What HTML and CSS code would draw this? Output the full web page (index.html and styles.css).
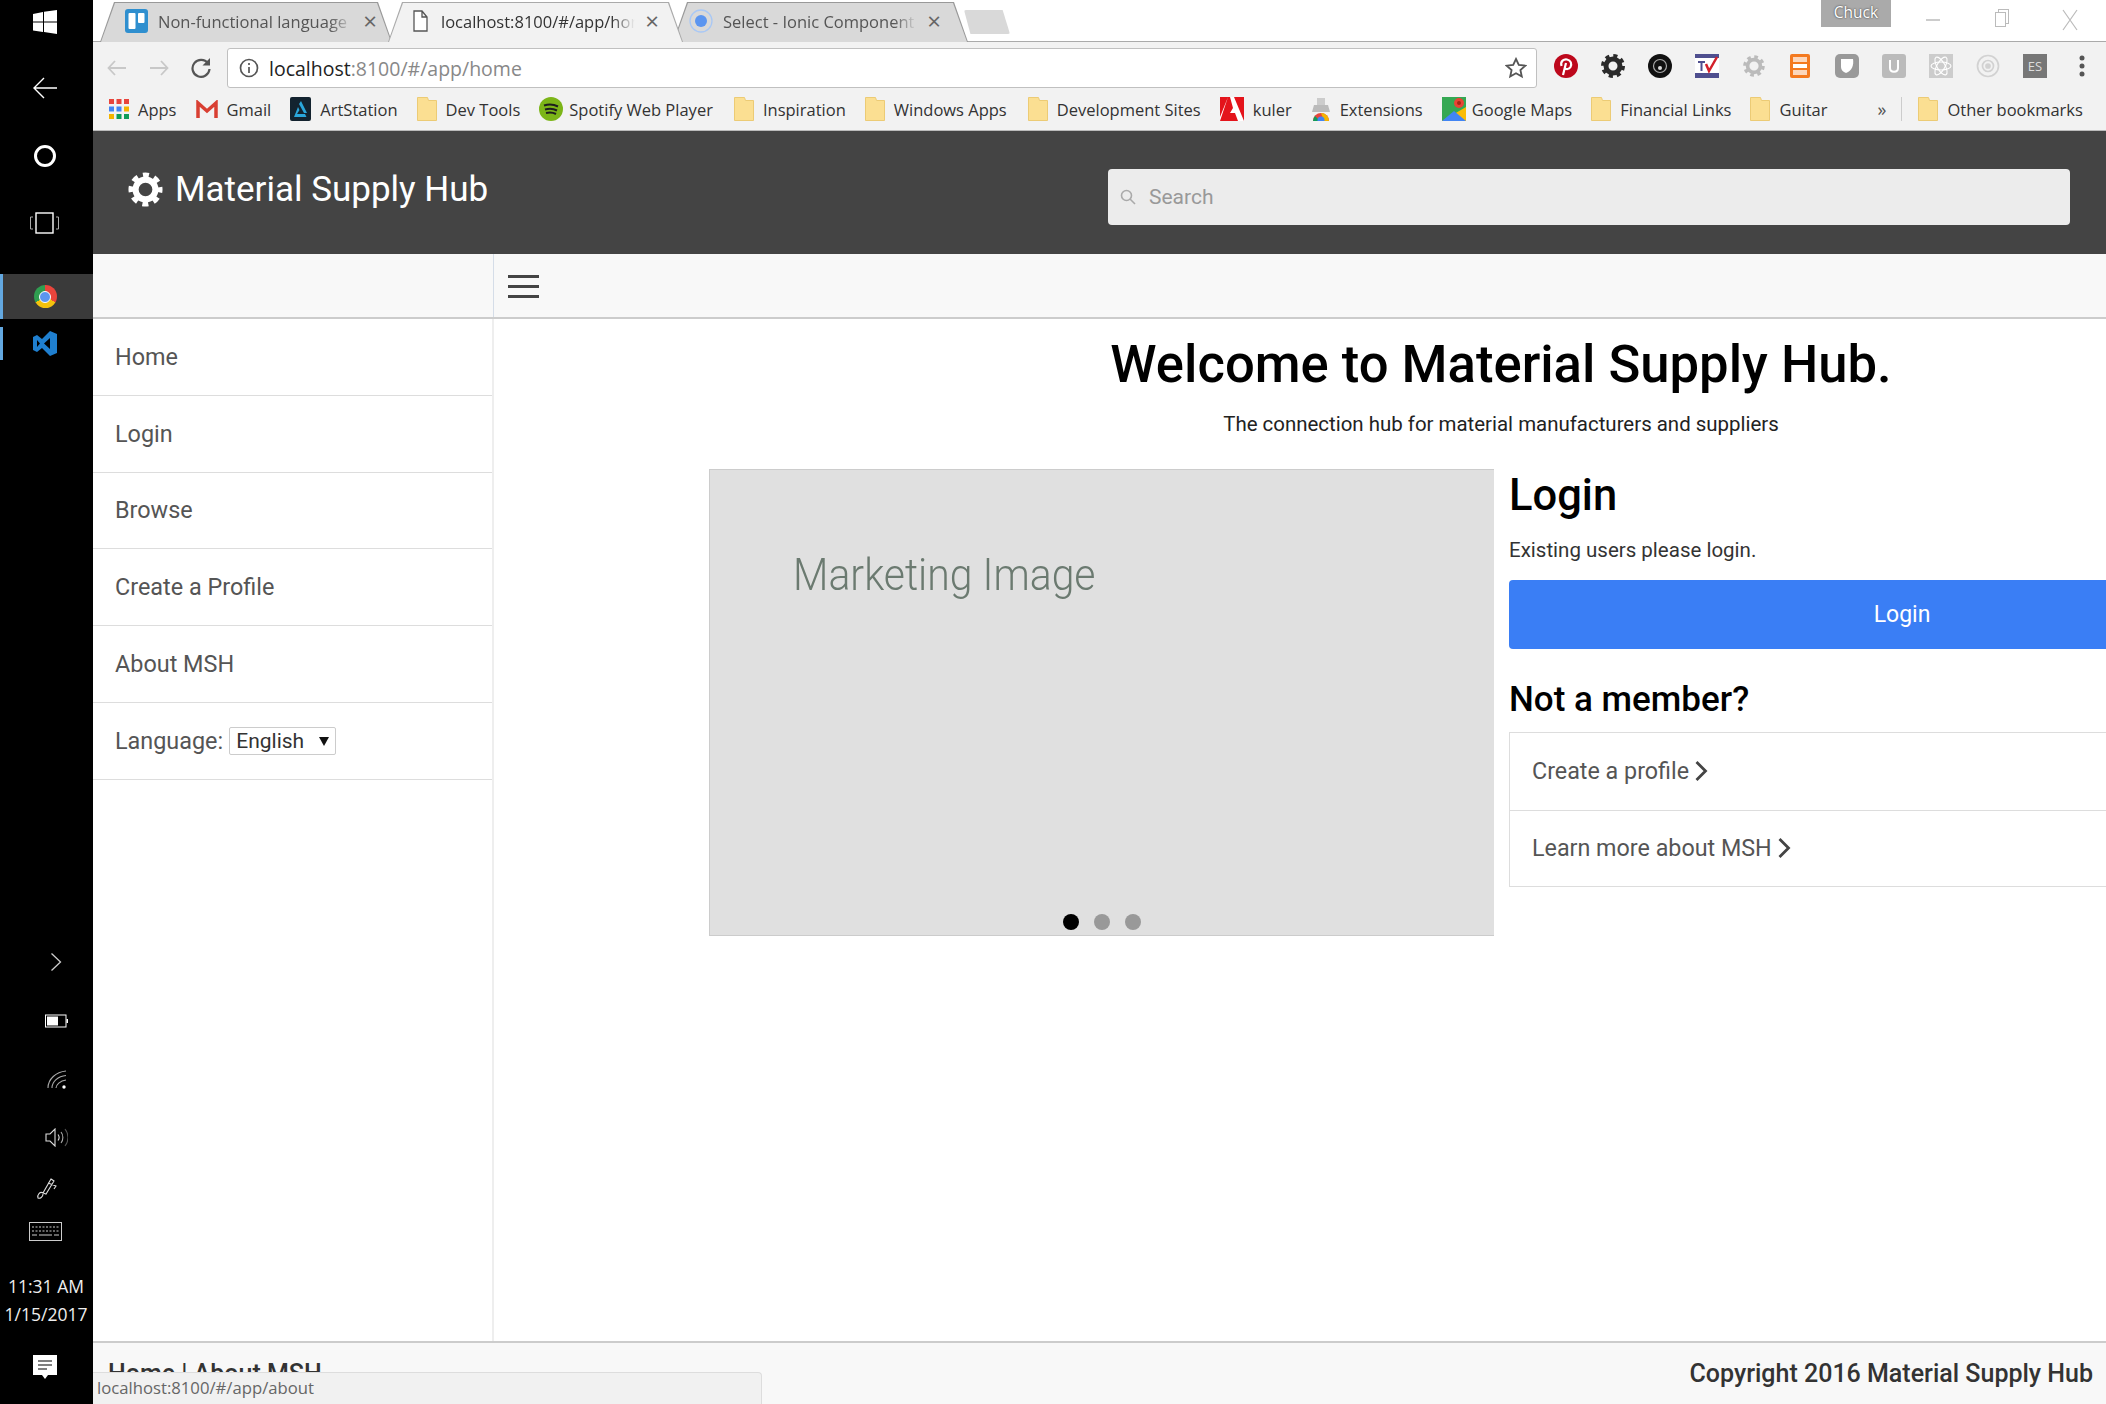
FILE: index.html
```html
<!DOCTYPE html>
<html lang="en">
<head>
    <meta charset="UTF-8">
    <title>Material Supply Hub</title>
    <link rel="stylesheet" href="styles.css">
</head>
<body>
    <aside class="taskbar">
        <div class="task-slot slot-win">
            <svg width="24" height="24" viewBox="0 0 24 24" fill="#fff"><path d="M0 4l10-2v9.500H0zM11 1.800L24 0v11.500H11zM0 12.500h10V22L0 20.500zM11 12.500h13V24l-13-2z"/></svg>
        </div>
        <div class="task-slot slot-back">
            <svg width="26" height="22" viewBox="0 0 26 22" fill="none" stroke="#fff" stroke-width="1.400"><path d="M25 11H2M12 1L2 11l10 10"/></svg>
        </div>
        <div class="task-slot slot-circle"><span class="cortana"></span></div>
        <div class="task-slot slot-view">
            <svg width="32" height="22" viewBox="0 0 32 22" fill="none" stroke="#fff"><rect x="7" y="1" width="17" height="20" stroke-width="1.400"/><path d="M4 5H1.500v12H4M27 5h2.500v12H27" stroke="#aaa"/></svg>
        </div>
        <div class="task-slot slot-chrome is-running is-active"><span class="chrome-logo"><span></span></span></div>
        <div class="task-slot slot-code is-running">
            <svg width="24" height="25" viewBox="0 0 24 25" fill="#1f7fcf"><path d="M17 0l7 3v19l-7 3-8-8-5 4-4-2V6l4-2 5 4zM4 9v7l3-3.500zM17 7l-6 5.500 6 5.500z"/></svg>
        </div>

        <div class="tray">
            <svg class="tray-chevron" width="12" height="20" viewBox="0 0 12 20" fill="none" stroke="#ccc" stroke-width="1.300"><path d="M1.500 1.500l9 8.500-9 8.500"/></svg>
            <svg class="tray-battery" width="23" height="14" viewBox="0 0 23 14"><rect x="0.500" y="1" width="20.500" height="12" fill="none" stroke="#fff"/><rect x="2" y="2.500" width="11" height="9" fill="#fff"/><rect x="21.500" y="5" width="1.500" height="4" fill="#fff"/></svg>
            <svg class="tray-wifi" width="20" height="20" viewBox="0 0 20 20" fill="none" stroke="#aaa" stroke-width="1.100"><path d="M1 18C1 9 9 2 19 1M5 18c0-6 6-12 14-12.500M9 18c0-3 4-7.500 10-8"/><circle cx="17" cy="17" r="1.700" fill="#fff" stroke="none"/></svg>
            <svg class="tray-sound" width="23" height="19" viewBox="0 0 23 19" fill="none" stroke="#ddd" stroke-width="1.100"><path d="M1 6h4l5-5v17l-5-5H1zM13 6.500c1.500 2 1.500 4 0 6"/><path d="M16 4c2.500 3 2.500 8 0 11" stroke="#aaa"/><path d="M20 1c4 5 4 12 0 17" stroke="#555"/></svg>
            <svg class="tray-pen" width="21" height="22" viewBox="0 0 21 22" fill="none" stroke="#ddd" stroke-width="1.100"><path d="M15 1l3 2-8 13-3-1zM12 5l8 3-2 3M7 15c-3-2-6 2-5 5 2 1 5-1 5-4"/></svg>
            <svg class="tray-keys" width="33" height="19" viewBox="0 0 33 19" fill="none" stroke="#ccc"><rect x="0.500" y="0.500" width="32" height="18"/><path d="M3 5h27M3 9h27" stroke-dasharray="2 1.500"/><path d="M3 13h5M10 13h13M25 13h5"/></svg>
            <div class="clock">
                <span>11:31 AM</span>
                <span>1/15/2017</span>
            </div>
            <svg class="tray-note" width="24" height="24" viewBox="0 0 24 24"><path d="M0 0h24v20h-9l-3 4-3-4H0z" fill="#fff"/><path d="M5 6h14M5 10h14M5 14h9" stroke="#000" stroke-width="1.200"/></svg>
        </div>
    </aside>

    <div class="window">
        <div class="tabstrip">
            <div class="tab is-first">
                <div class="tab-face">
                    <svg class="tab-icon" width="23" height="24" viewBox="0 0 23 24"><rect width="23" height="24" rx="3" fill="#2f8fcf"/><rect x="3.500" y="4" width="7" height="16" rx="1" fill="#fff"/><rect x="13" y="4" width="6.500" height="10" rx="1" fill="#fff"/></svg>
                    <span class="tab-title">Non-functional language</span>
                    <span class="tab-close">×</span>
                </div>
            </div>
            <div class="tab is-current">
                <div class="tab-face">
                    <svg class="tab-icon" width="15" height="22" viewBox="0 0 15 22" fill="#fff" stroke="#555" stroke-width="1.300"><path d="M1 1h8l5 6v14H1zM9 1v6h5"/></svg>
                    <span class="tab-title">localhost:8100/#/app/home</span>
                    <span class="tab-close">×</span>
                </div>
            </div>
            <div class="tab is-last">
                <div class="tab-face">
                    <svg class="tab-icon" width="24" height="24" viewBox="0 0 24 24"><circle cx="12" cy="12" r="11" fill="none" stroke="#a9c8f5" stroke-width="1.300"/><circle cx="12" cy="12" r="6" fill="#5b95f0"/></svg>
                    <span class="tab-title">Select - Ionic Component</span>
                    <span class="tab-close">×</span>
                </div>
            </div>
            <span class="new-tab"></span>
            <div class="window-controls">
                <span class="profile">Chuck</span>
                <svg class="win-btn" width="16" height="16" viewBox="0 0 16 16" stroke="#bbb" stroke-width="1.500"><path d="M1 8h14"/></svg>
                <svg class="win-btn" width="16" height="20" viewBox="0 0 16 20" fill="#fff" stroke="#bbb"><rect x="4.500" y="1.500" width="10" height="14"/><rect x="1.500" y="4.500" width="10" height="14"/></svg>
                <svg class="win-btn" width="16" height="24" viewBox="0 0 16 24" stroke="#bbb" stroke-width="1.200"><path d="M1 2l14 20M15 2L1 22"/></svg>
            </div>
        </div>

        <div class="toolbar">
            <svg class="nav-icon" width="20" height="16" viewBox="0 0 20 16" fill="none" stroke="#c8c8c8" stroke-width="1.800"><path d="M19 8H2M8 1L1.500 8 8 15"/></svg>
            <svg class="nav-icon" width="20" height="16" viewBox="0 0 20 16" fill="none" stroke="#c8c8c8" stroke-width="1.800"><path d="M1 8h17M12 1l6.500 7-6.500 7"/></svg>
            <svg class="nav-icon" width="22" height="22" viewBox="0 0 22 22" fill="none" stroke="#555" stroke-width="2.200"><path d="M18 6.500A8.500 8.500 0 1 0 19.500 12"/><path d="M20 1v7.500h-7.500z" fill="#555" stroke="none"/></svg>
            <div class="urlbar">
                <svg width="20" height="20" viewBox="0 0 20 20" fill="none" stroke="#555" stroke-width="1.700"><circle cx="10" cy="10" r="8.500"/><path d="M10 9v6M10 5v2"/></svg>
                <span class="url"><b>localhost</b>:8100/#/app/home</span>
                <svg class="url-star" width="22" height="22" viewBox="0 0 22 22" fill="none" stroke="#555" stroke-width="1.800"><path d="M11 2l2.800 6 6.500.700-4.900 4.300 1.400 6.500L11 16.200 5.200 19.500l1.400-6.500-4.900-4.300 6.500-.7z"/></svg>
            </div>
            <div class="extensions">
                <span class="ext"><svg width="24" height="24" viewBox="0 0 24 24"><circle cx="12" cy="12" r="12" fill="#bd081c"/><path d="M9 21l3-12M7.500 12C6 7 10 5 13 5.500c4 .6 5 4.500 3.500 7.500-1.500 2.500-4.500 2.500-5.500 1" fill="none" stroke="#fff" stroke-width="2.200"/></svg></span>
                <span class="ext"><svg width="24" height="24" viewBox="0 0 24 24"><circle cx="12" cy="12" r="7" fill="none" stroke="#2b2b2b" stroke-width="5"/><circle cx="12" cy="12" r="10" fill="none" stroke="#2b2b2b" stroke-width="4" stroke-dasharray="4 3.850"/></svg></span>
                <span class="ext"><svg width="24" height="24" viewBox="0 0 24 24"><circle cx="12" cy="12" r="12" fill="#111"/><circle cx="12" cy="12" r="6.500" fill="none" stroke="#aaa" stroke-width="1.200"/><circle cx="12" cy="14" r="2" fill="#ddd"/></svg></span>
                <span class="ext"><svg width="24" height="24" viewBox="0 0 24 24"><rect width="24" height="24" fill="#4f4f8f"/><rect y="4" width="24" height="15" fill="#fff"/><path d="M3 7h7v2H7.500v8h-2V9H3z" fill="#4f4f8f"/><path d="M11 10l3 7L22 3" fill="none" stroke="#d3202a" stroke-width="2.500"/></svg></span>
                <span class="ext is-dim"><svg width="22" height="24" viewBox="0 0 24 24"><circle cx="12" cy="12" r="7" fill="none" stroke="#bbb" stroke-width="4"/><circle cx="12" cy="12" r="10" fill="none" stroke="#bbb" stroke-width="3.500" stroke-dasharray="4 3.850"/></svg></span>
                <span class="ext"><svg width="20" height="24" viewBox="0 0 20 24"><rect width="20" height="24" rx="2" fill="#f47a20"/><rect x="3" y="3" width="14" height="5" fill="#fff" opacity=".7"/><rect x="3" y="10" width="14" height="4" fill="#fff"/><rect x="3" y="16" width="14" height="5" fill="#fff" opacity=".7"/></svg></span>
                <span class="ext"><svg width="24" height="24" viewBox="0 0 24 24"><rect width="24" height="24" rx="5" fill="#999"/><path d="M6 5h12c1 6-1 12-7 14-3-1-5-3-5-6z" fill="#fff"/></svg></span>
                <span class="ext"><svg width="24" height="24" viewBox="0 0 24 24"><rect width="24" height="24" rx="3" fill="#bbb"/><path d="M8 6v8c0 5 8 5 8 0V6" fill="none" stroke="#fff" stroke-width="2"/></svg></span>
                <span class="ext"><svg width="24" height="24" viewBox="0 0 24 24" fill="none" stroke="#fff" stroke-width="1.100"><rect width="24" height="24" fill="#ccc" stroke="none"/><ellipse cx="12" cy="12" rx="10" ry="4"/><ellipse cx="12" cy="12" rx="10" ry="4" transform="rotate(60 12 12)"/><ellipse cx="12" cy="12" rx="10" ry="4" transform="rotate(120 12 12)"/></svg></span>
                <span class="ext"><svg width="24" height="24" viewBox="0 0 24 24" fill="none" stroke="#d2d2d2" stroke-width="1.700"><circle cx="12" cy="12" r="10.500"/><circle cx="12" cy="12" r="5.500"/><circle cx="12" cy="12" r="2" fill="#d2d2d2"/></svg></span>
                <span class="ext"><span class="ext-es">ES</span></span>
                <span class="ext"><svg width="6" height="24" viewBox="0 0 6 24" fill="#555"><circle cx="3" cy="4" r="2.500"/><circle cx="3" cy="12" r="2.500"/><circle cx="3" cy="20" r="2.500"/></svg></span>
            </div>
        </div>

        <div class="bookmarks">
            <span class="mark mark-apps">
                <svg width="20" height="20" viewBox="0 0 20 20"><g fill="#e8453c"><rect width="5" height="5"/><rect x="7.500" width="5" height="5"/><rect x="15" width="5" height="5"/></g><g fill="#4285f4"><rect y="7.500" width="5" height="5"/><rect x="7.500" y="7.500" width="5" height="5"/></g><rect x="15" y="7.500" width="5" height="5" fill="#f4b400"/><rect y="15" width="5" height="5" fill="#f4b400"/><rect x="7.500" y="15" width="5" height="5" fill="#0f9d58"/><rect x="15" y="15" width="5" height="5" fill="#0f9d58"/></svg>
                Apps
            </span>
            <span class="mark mark-gmail">
                <svg width="22" height="18" viewBox="0 0 22 18" fill="none" stroke="#d93f32" stroke-width="3.500"><path d="M2 18V3l9 8 9-8v15"/></svg>
                Gmail
            </span>
            <span class="mark mark-art">
                <svg width="21" height="24" viewBox="0 0 21 24"><rect width="21" height="24" rx="2" fill="#13232f"/><path d="M11 4l6 12h-3L9 7zM8 10l1.500 3L7 17h8l1.500 3H4z" fill="#2aa6da"/></svg>
                ArtStation
            </span>
            <span class="mark mark-dev">
                <svg class="folder" width="20" height="24" viewBox="0 0 20 24"><path d="M.5.500h10l1 3h8v20H.5z" fill="#fbdf92" stroke="#eccb75"/></svg>
                Dev Tools
            </span>
            <span class="mark mark-spot">
                <svg width="24" height="24" viewBox="0 0 24 24"><circle cx="12" cy="12" r="12" fill="#7cb518"/><path d="M5 8.500c5-1.500 10-1 14 1M6 12.500c4-1 8.500-.8 12 1M7 16c3.500-.8 7-.6 10 1" fill="none" stroke="#1e1e1e" stroke-width="2"/></svg>
                Spotify Web Player
            </span>
            <span class="mark mark-insp">
                <svg class="folder" width="20" height="24" viewBox="0 0 20 24"><path d="M.5.500h10l1 3h8v20H.5z" fill="#fbdf92" stroke="#eccb75"/></svg>
                Inspiration
            </span>
            <span class="mark mark-win">
                <svg class="folder" width="20" height="24" viewBox="0 0 20 24"><path d="M.5.500h10l1 3h8v20H.5z" fill="#fbdf92" stroke="#eccb75"/></svg>
                Windows Apps
            </span>
            <span class="mark mark-sites">
                <svg class="folder" width="20" height="24" viewBox="0 0 20 24"><path d="M.5.500h10l1 3h8v20H.5z" fill="#fbdf92" stroke="#eccb75"/></svg>
                Development Sites
            </span>
            <span class="mark mark-kuler">
                <svg width="24" height="24" viewBox="0 0 24 24"><rect width="24" height="24" fill="#e4141b"/><path d="M10 0h4l10 24h-6l-3-8h-5l3-5zM8 0L0 20V24z" fill="#fff"/></svg>
                kuler
            </span>
            <span class="mark mark-ext">
                <svg width="20" height="24" viewBox="0 0 20 24"><rect x="6" y="1" width="8" height="7" fill="#ccc"/><path d="M3 8h14l2 7H1z" fill="#bbb"/><path d="M2 24a8 8 0 0 1 16 0z" fill="#e8453c"/><path d="M10 16a8 8 0 0 1 8 8h-5z" fill="#f4b400"/><path d="M2 24a8 8 0 0 1 2-5l5 5z" fill="#0f9d58"/><circle cx="10" cy="23" r="3.500" fill="#4285f4"/></svg>
                Extensions
            </span>
            <span class="mark mark-maps">
                <svg width="24" height="24" viewBox="0 0 24 24"><rect width="24" height="24" fill="#35a853"/><path d="M0 24L24 10v14z" fill="#fbbc05"/><path d="M0 24L12 14l12 10z" fill="#4285f4"/><circle cx="17" cy="6" r="5" fill="#ea4335"/><circle cx="17" cy="6" r="2" fill="#a52714"/></svg>
                Google Maps
            </span>
            <span class="mark mark-fin">
                <svg class="folder" width="20" height="24" viewBox="0 0 20 24"><path d="M.5.500h10l1 3h8v20H.5z" fill="#fbdf92" stroke="#eccb75"/></svg>
                Financial Links
            </span>
            <span class="mark mark-guitar">
                <svg class="folder" width="20" height="24" viewBox="0 0 20 24"><path d="M.5.500h10l1 3h8v20H.5z" fill="#fbdf92" stroke="#eccb75"/></svg>
                Guitar
            </span>
            <span class="mark-more">»</span>
            <span class="mark-sep"></span>
            <span class="mark">
                <svg class="folder" width="20" height="24" viewBox="0 0 20 24"><path d="M.5.500h10l1 3h8v20H.5z" fill="#fbdf92" stroke="#eccb75"/></svg>
                Other bookmarks
            </span>
        </div>

        <div class="page">
            <header class="site-header">
                <svg class="logo" width="35" height="35" viewBox="0 0 37 37" fill="none" stroke="#fff"><circle cx="18.500" cy="18.500" r="10.500" stroke-width="6.500"/><circle cx="18.500" cy="18.500" r="15" stroke-width="6" stroke-dasharray="6.200 5.580" stroke-dashoffset="3.100"/></svg>
                <h2 class="site-title">Material Supply Hub</h2>
                <div class="search">
                    <svg width="16" height="16" viewBox="0 0 16 16" fill="none" stroke="#aaa" stroke-width="1.600"><circle cx="6.500" cy="6.500" r="5"/><path d="M10 10l5 5"/></svg>
                    <span>Search</span>
                </div>
            </header>

            <div class="subbar">
                <div class="subbar-left"></div>
                <button class="menu-btn"><span></span><span></span><span></span></button>
            </div>

            <div class="page-body">
                <nav class="sidebar">
                    <a class="side-item">Home</a>
                    <a class="side-item">Login</a>
                    <a class="side-item">Browse</a>
                    <a class="side-item">Create a Profile</a>
                    <a class="side-item">About MSH</a>
                    <div class="side-item">
                        Language:
                        <label class="lang">
                            <select>
                                <option>English</option>
                            </select>
                        </label>
                    </div>
                </nav>

                <main class="main">
                    <div class="main-inner">
                        <h1>Welcome to Material Supply Hub.</h1>
                        <p class="tagline">The connection hub for material manufacturers and suppliers</p>
                        <div class="home-row">
                            <div class="slider">
                                <div class="slide-text">Marketing Image</div>
                                <div class="dots">
                                    <span class="dot is-on"></span>
                                    <span class="dot"></span>
                                    <span class="dot"></span>
                                </div>
                            </div>
                            <div class="login-col">
                                <h2 class="login-title">Login</h2>
                                <p class="login-note">Existing users please login.</p>
                                <button class="login-btn"><span>Login</span></button>
                                <h3 class="member-title">Not a member?</h3>
                                <div class="member-list">
                                    <a class="member-item">Create a profile
                                        <svg width="14" height="22" viewBox="0 0 14 22" fill="none" stroke="#444" stroke-width="2.800"><path d="M2.500 2l9 9-9 9"/></svg>
                                    </a>
                                    <a class="member-item">Learn more about MSH
                                        <svg width="14" height="22" viewBox="0 0 14 22" fill="none" stroke="#444" stroke-width="2.800"><path d="M2.500 2l9 9-9 9"/></svg>
                                    </a>
                                </div>
                            </div>
                        </div>
                    </div>
                </main>
            </div>

            <footer class="site-footer">
                <span>Home | About MSH</span>
                <span>Copyright 2016 Material Supply Hub</span>
            </footer>
        </div>

        <div class="status-bubble">localhost:8100/#/app/about</div>
    </div>
</body>
</html>
```

FILE: styles.css
```css
* {
    box-sizing: border-box;
}

html {
    height: 1404px;
    overflow: hidden;
}

body {
    margin: 0;
    width: 2106px;
    height: 1404px;
    display: flex;
    overflow: hidden;
    font-family: 'Roboto', sans-serif;
    background-color: #fff;
}

/* Windows taskbar */
.taskbar {
    width: 93px;
    flex-shrink: 0;
    background-color: #000;
    display: flex;
    flex-direction: column;
}

.task-slot {
    padding-right: 3px;
    display: flex;
    align-items: center;
    justify-content: center;
}

.slot-win { height: 44px; }
.slot-back { height: 44px; margin-top: 22px; }
.slot-circle { height: 44px; margin-top: 24px; }
.slot-view { height: 44px; margin-top: 23px; }
.slot-chrome { height: 45px; margin-top: 29px; background-color: #3a3a3a; }
.slot-code { height: 33px; margin-top: 8px; }

.is-running {
    border-left: 3px solid #63a8e0;
    padding-right: 6px;
}

.cortana {
    width: 22px;
    height: 22px;
    border: 3px solid #fff;
    border-radius: 50%;
}

.chrome-logo {
    width: 23px;
    height: 23px;
    border-radius: 50%;
    background: conic-gradient(#e8453c 0 120deg, #f4c20d 120deg 240deg, #2f9e50 240deg 360deg);
    display: flex;
    align-items: center;
    justify-content: center;
}

.chrome-logo span {
    width: 12px;
    height: 12px;
    border-radius: 50%;
    background-color: #5b95f0;
    border: 1.5px solid #fff;
}

.tray {
    margin-top: auto;
    padding: 0 3px 25px 0;
    display: flex;
    flex-direction: column;
    align-items: center;
}

.tray-chevron { margin-left: 22px; }
.tray-battery { margin: 42px 0 0 22px; }
.tray-wifi { margin: 42px 0 0 24px; }
.tray-sound { margin: 38px 0 0 22px; }
.tray-pen { margin: 31px 0 0 2px; }
.tray-keys { margin: 22px 0 0 0; }

.clock {
    margin: 35px 0 0 2px;
    display: flex;
    flex-direction: column;
    align-items: center;
    gap: 7px;
    font-family: 'Open Sans', sans-serif;
    font-size: 17.5px;
    line-height: 21px;
    color: #eee;
}

.tray-note { margin-top: 30px; }

/* Browser chrome */
.window {
    position: relative;
    flex: 1;
    min-width: 0;
    display: flex;
    flex-direction: column;
}

.tabstrip {
    height: 42px;
    display: flex;
    align-items: flex-end;
    padding-left: 7px;
    background-color: #fff;
    border-bottom: 1px solid #aaa;
}

.tab {
    width: 292px;
    height: 40px;
    margin-right: -4px;
    margin-bottom: -1px;
    background-color: #999;
    clip-path: polygon(14px 0, calc(100% - 14px) 0, 100% 100%, 0 100%);
}

.tab.is-current {
    width: 295px;
    margin-right: -10px;
    z-index: 1;
    background-color: #aaa;
}

.tab.is-last {
    width: 295px;
    margin-right: -4px;
}

.tab-face {
    height: calc(100% - 1px);
    margin: 1px 1px 0;
    padding: 0 18px 3px 24px;
    display: flex;
    align-items: center;
    gap: 10px;
    background-color: #d9d9d9;
    clip-path: polygon(14px 0, calc(100% - 14px) 0, 100% 100%, 0 100%);
    font-family: 'Open Sans', sans-serif;
    font-size: 16.5px;
    color: #555;
}

.is-first .tab-face {
    padding-right: 14px;
}

.is-current .tab-face {
    padding-right: 23px;
    background-color: #f2f2f2;
    color: #333;
}

.is-last .tab-face {
    padding-right: 26px;
}

.tab-icon {
    flex-shrink: 0;
}

.is-current .tab-icon {
    margin-right: 3px;
}

.is-last .tab-icon {
    margin-left: -9px;
}

.tab-title {
    flex: 1;
    min-width: 0;
    white-space: nowrap;
    overflow: hidden;
    -webkit-mask-image: linear-gradient(to right, #000 88%, transparent);
    mask-image: linear-gradient(to right, #000 88%, transparent);
}

.tab-close {
    font-size: 24px;
    line-height: 24px;
    color: #666;
}

.new-tab {
    width: 46px;
    height: 24px;
    margin: 0 0 7px 0;
    background-color: #d9d9d9;
    border-radius: 2px;
    clip-path: polygon(0 0, 84% 0, 100% 100%, 14% 100%);
}

.window-controls {
    margin-left: auto;
    align-self: flex-start;
    display: flex;
    align-items: flex-start;
}

.profile {
    width: 70px;
    height: 27px;
    background-color: #aaa;
    color: #fff;
    font-family: 'Open Sans', sans-serif;
    font-size: 15.5px;
    line-height: 25px;
    text-align: center;
    text-shadow: 0 0 2px #222;
}

.win-btn {
    margin: 8px 0 0 53px;
}

.win-btn:first-of-type {
    margin-top: 12px;
    margin-left: 34px;
}

.win-btn:last-child {
    margin-left: 52px;
    margin-right: 28px;
    margin-top: 8px;
}

.toolbar {
    height: 46px;
    padding: 6px 0 0 14px;
    display: flex;
    align-items: flex-start;
    background-color: #f2f2f2;
}

.nav-icon {
    margin: 12px 22px 0 0;
}

.nav-icon:nth-child(3) {
    margin: 9px 15px 0 -1px;
}

.urlbar {
    width: 1310px;
    height: 40px;
    padding: 0 9px 0 11px;
    display: flex;
    align-items: center;
    gap: 10px;
    background-color: #fff;
    border: 1px solid #c0c0c0;
    border-radius: 3px;
}

.url {
    flex: 1;
    font-family: 'Open Sans', sans-serif;
    font-size: 19.5px;
    color: #888;
}

.url b {
    font-weight: normal;
    color: #222;
}

.extensions {
    margin: 3px 0 0 5.5px;
    display: flex;
}

.ext {
    width: 46.9px;
    height: 30px;
    display: flex;
    align-items: center;
    justify-content: center;
}

.ext-es {
    width: 24px;
    height: 24px;
    background-color: #777;
    color: #ddd;
    font-family: 'Open Sans', sans-serif;
    font-size: 13px;
    line-height: 24px;
    text-align: center;
}

.bookmarks {
    height: 43px;
    padding: 0 0 0 16px;
    display: flex;
    align-items: center;
    gap: 19px;
    background-color: #f2f2f2;
    border-bottom: 1px solid #bbb;
    font-family: 'Open Sans', sans-serif;
    font-size: 16.5px;
    color: #333;
}

.mark {
    display: flex;
    align-items: center;
    gap: 9px;
    white-space: nowrap;
}

.mark svg {
    flex-shrink: 0;
}

.mark-spot {
    gap: 6px;
    margin-right: 2px;
}

.mark-maps {
    gap: 6px;
}

.mark-win {
    margin-right: 2px;
}

.mark-more {
    margin-left: 31px;
    color: #555;
    font-size: 18px;
}

.mark-sep {
    width: 1px;
    height: 24px;
    margin: 0 -3px 0 -4px;
    background-color: #ccc;
}

/* Page */
.page {
    flex: 1;
    min-height: 0;
    display: flex;
    flex-direction: column;
}

.site-header {
    height: 123px;
    padding: 0 36px 6px 35px;
    display: flex;
    align-items: center;
    background-color: #444;
    color: #fff;
}

.logo {
    flex-shrink: 0;
}

.site-title {
    margin: 0 0 0 12px;
    font-size: 35px;
    font-weight: 400;
}

.search {
    width: 962px;
    height: 56px;
    margin: 14px 0 0 auto;
    padding: 0 12px;
    display: flex;
    align-items: center;
    gap: 13px;
    background-color: #ececec;
    border-radius: 4px;
    font-size: 21px;
    color: #999;
}

.subbar {
    height: 65px;
    display: flex;
    background-color: #f8f8f8;
    border-bottom: 2px solid #ccc;
}

.subbar-left {
    width: 401px;
    border-right: 1px solid #d5dde8;
}

.menu-btn {
    width: 60px;
    padding: 2px 15px 0 14px;
    border: none;
    background: none;
    display: flex;
    flex-direction: column;
    justify-content: center;
    gap: 7px;
}

.menu-btn span {
    height: 3px;
    background-color: #444;
}

.page-body {
    flex: 1;
    min-height: 0;
    display: flex;
}

.sidebar {
    width: 401px;
    flex-shrink: 0;
    border-right: 2px solid #eee;
}

.side-item {
    height: 76.8px;
    padding-left: 22px;
    display: flex;
    align-items: center;
    border-bottom: 1px solid #ddd;
    font-size: 23.4px;
    color: #555;
}

.lang {
    position: relative;
    margin-left: 6px;
    display: inline-block;
}

.lang::after {
    content: "";
    position: absolute;
    right: 7px;
    top: 10px;
    border-left: 5px solid transparent;
    border-right: 5px solid transparent;
    border-top: 9px solid #111;
}

.lang select {
    display: block;
    width: 107px;
    height: 28px;
    padding: 0 0 0 6px;
    appearance: none;
    background-color: #fff;
    border: 1px solid #ccc;
    border-radius: 2px;
    font-family: 'Roboto', sans-serif;
    font-size: 21px;
    color: #333;
}

.main {
    flex: 1;
    min-width: 0;
    overflow: hidden;
}

/* the content is wider than the window, the right side gets cut off */
.main-inner {
    width: 2014px;
    padding-top: 15px;
    display: flex;
    flex-direction: column;
    align-items: center;
}

h1 {
    margin: 0;
    font-size: 52.6px;
    line-height: 60px;
    font-weight: 500;
    color: #000;
}

.tagline {
    margin: 16px 0 0;
    font-size: 20.45px;
    line-height: 28px;
    color: #222;
}

.home-row {
    width: 1586px;
    margin: 31px 0 0 2px;
    display: flex;
    gap: 15px;
}

.slider {
    position: relative;
    width: 785px;
    height: 467px;
    padding: 79px 0 0 83px;
    background-color: #e0e0e0;
    border: 1px solid #ccc;
    border-width: 1px 0 1px 1px;
}

.slide-text {
    font-size: 44px;
    font-weight: 300;
    line-height: 52px;
    color: #6b7a70;
    transform: scaleX(0.93);
    transform-origin: left;
}

.dots {
    position: absolute;
    left: 0;
    right: 0;
    bottom: 5px;
    display: flex;
    justify-content: center;
    gap: 15px;
}

.dot {
    width: 16px;
    height: 16px;
    border-radius: 50%;
    background-color: #999;
}

.dot.is-on {
    background-color: #000;
}

.login-col {
    flex: 1;
    min-width: 0;
}

.login-title {
    margin: 2px 0 0;
    font-size: 43.5px;
    line-height: 50px;
    font-weight: 500;
    color: #000;
}

.login-note {
    margin: 15px 0 0;
    font-size: 20.5px;
    line-height: 28px;
    color: #333;
}

.login-btn {
    width: 100%;
    height: 69px;
    margin-top: 16px;
    display: block;
    background-color: #3a7ef5;
    border: none;
    border-radius: 4px;
    color: #fff;
    font-family: 'Roboto', sans-serif;
    font-size: 23px;
}

.member-title {
    margin: 31px 0 0;
    font-size: 35px;
    line-height: 40px;
    font-weight: 500;
    color: #000;
}

.member-list {
    margin-top: 12px;
    border: 1px solid #ddd;
    border-right: none;
}

.member-item {
    height: 76.5px;
    padding-left: 22px;
    display: flex;
    align-items: center;
    gap: 5px;
    font-size: 23.3px;
    color: #555;
}

.member-item + .member-item {
    border-top: 1px solid #ddd;
}

.site-footer {
    height: 63px;
    flex-shrink: 0;
    padding: 0 13px 0 15px;
    display: flex;
    align-items: center;
    justify-content: space-between;
    background-color: #f8f8f8;
    border-top: 2px solid #ccc;
    font-size: 25px;
    font-weight: 500;
    color: #333;
}

/* link preview of the browser, lies over the footer */
.status-bubble {
    position: absolute;
    left: 0;
    bottom: 0;
    width: 669px;
    height: 32px;
    padding-left: 4px;
    background-color: #f1f1f1;
    border: 1px solid #ddd;
    border-width: 1px 1px 0 0;
    border-top-right-radius: 4px;
    font-family: 'Open Sans', sans-serif;
    font-size: 16.7px;
    line-height: 30px;
    color: #666;
}
```
